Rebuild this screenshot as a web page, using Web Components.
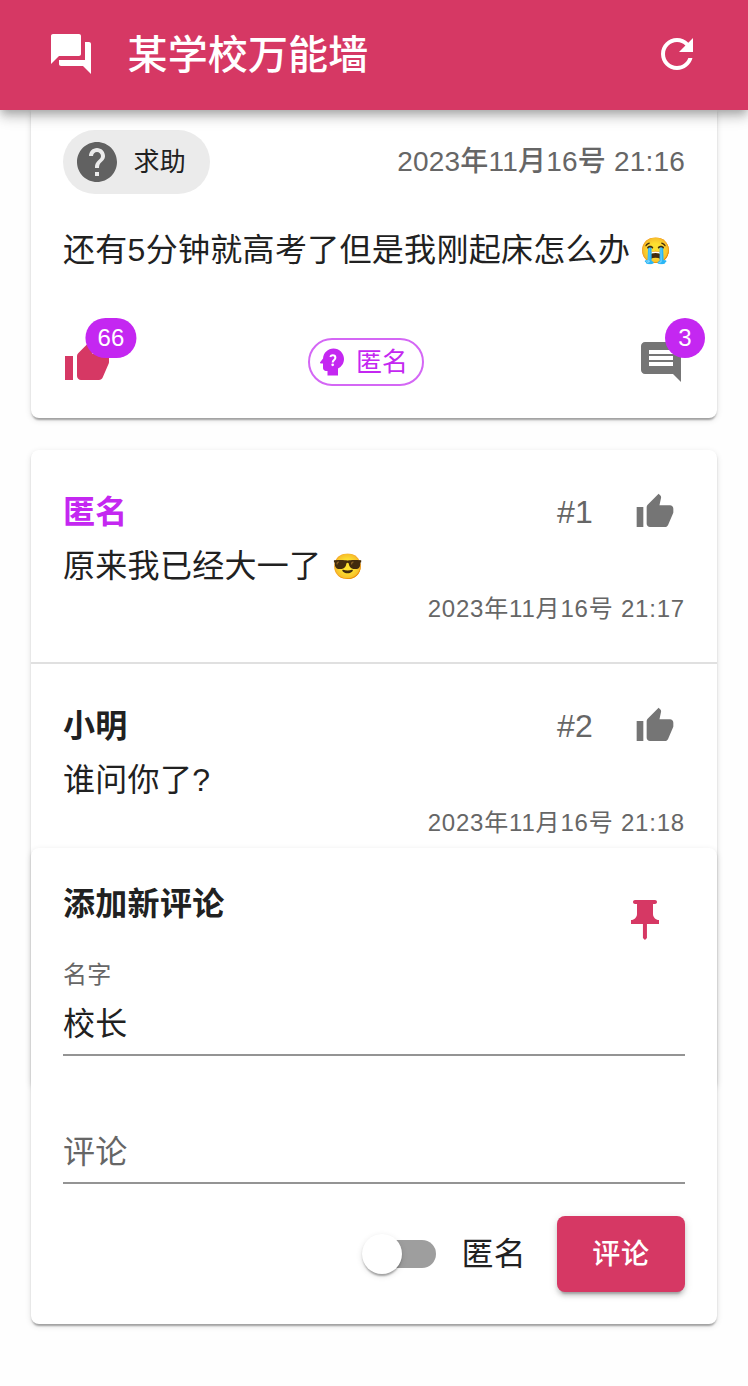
<!DOCTYPE html>
<html lang="zh-CN">
<head>
<meta charset="utf-8">
<title>某学校万能墙</title>
<style>
  html, body { margin: 0; height: 100%; }
  body {
    --primary: #d63864;
    --secondary: #c427f1;
    --muted: #666;
    --icon: #757575;
    --elevation-1: 0 4px 2px -2px rgba(0,0,0,.2), 0 2px 2px rgba(0,0,0,.14), 0 2px 6px rgba(0,0,0,.12);
    background: #fefefe;
    color: #212121;
    overflow: hidden;
    font: 400 32px/48px "Liberation Sans", "Noto Sans CJK SC", sans-serif;
    letter-spacing: .3px;
  }
</style>
</head>
<body>
<wall-page>
  <app-bar slot="bar">某学校万能墙</app-bar>
  <post-card tag="求助" date="2023年11月16号 21:16" likes="66" comments="3" author="匿名">还有5分钟就高考了但是我刚起床怎么办 <wall-emoji>😭</wall-emoji></post-card>
  <comment-list>
    <comment-item author="匿名" anonymous no="#1" date="2023年11月16号 21:17">原来我已经大一了 <wall-emoji>😎</wall-emoji></comment-item>
    <comment-item author="小明" no="#2" date="2023年11月16号 21:18">谁问你了?</comment-item>
  </comment-list>
  <comment-form slot="form"></comment-form>
</wall-page>

<script>
const ICONS = {
  forum: '<path d="M21 6h-2v9H6v2c0 .55.45 1 1 1h11l4 4V7c0-.55-.45-1-1-1zm-4 6V3c0-.55-.45-1-1-1H3c-.55 0-1 .45-1 1v14l4-4h10c.55 0 1-.45 1-1z"/>',
  refresh: '<path d="M17.65 6.35C16.2 4.9 14.21 4 12 4c-4.42 0-7.99 3.58-7.99 8s3.57 8 7.99 8c3.73 0 6.84-2.55 7.73-6h-2.08c-.82 2.33-3.04 4-5.65 4-3.31 0-6-2.69-6-6s2.69-6 6-6c1.66 0 3.14.69 4.22 1.78L13 11h7V4l-2.35 2.35z"/>',
  help: '<path d="M12 2C6.48 2 2 6.48 2 12s4.48 10 10 10 10-4.48 10-10S17.52 2 12 2zm1 17h-2v-2h2v2zm2.07-7.75l-.9.92C13.45 12.9 13 13.5 13 15h-2v-.5c0-1.1.45-2.1 1.17-2.83l1.24-1.26c.37-.36.59-.86.59-1.41 0-1.1-.9-2-2-2s-2 .9-2 2H8c0-2.21 1.79-4 4-4s4 1.79 4 4c0 .88-.36 1.68-.93 2.25z"/>',
  thumb: '<path d="M1 21h4V9H1v12zm22-11c0-1.1-.9-2-2-2h-6.31l.95-4.57.03-.32c0-.41-.17-.79-.44-1.06L14.17 1 7.59 7.59C7.22 7.95 7 8.45 7 9v10c0 1.1.9 2 2 2h9c.83 0 1.54-.5 1.84-1.22l3.02-7.05c.09-.23.14-.47.14-.73v-2z"/>',
  comment: '<path d="M21.99 4c0-1.1-.89-2-1.99-2H4c-1.1 0-2 .9-2 2v12c0 1.1.9 2 2 2h14l4 4-.01-18zM18 14H6v-2h12v2zm0-3H6V9h12v2zm0-3H6V6h12v2z"/>',
  psychology: '<path d="M13 3C9.25 3 6.2 5.94 6.02 9.64L4.1 12.2c-.25.33-.01.8.4.8H6v3c0 1.1.9 2 2 2h1v3h7v-4.68c2.36-1.12 4-3.53 4-6.32 0-3.87-3.13-7-7-7z"/><path d="M10.8 8.6c.35-.75.9-1.1 1.65-1.1 1.05 0 1.8.7 1.8 1.65 0 1.45-1.8 1.5-1.8 3.1" fill="none" stroke="#fff" stroke-width="1.35"/><circle cx="12.45" cy="13.9" r=".9" fill="#fff"/>',
  pin: '<path d="M16 9V4h1c.55 0 1-.45 1-1s-.45-1-1-1H7c-.55 0-1 .45-1 1s.45 1 1 1h1v5c0 1.66-1.34 3-3 3v2h5.97v7l1 1 1-1v-7H19v-2c-1.66 0-3-1.34-3-3z"/>'
};

class WallElement extends HTMLElement {
  connectedCallback() {
    if (this.shadowRoot) return;
    this.attachShadow({ mode: 'open' }).innerHTML = this.render();
  }
  attr(name) { return this.getAttribute(name) || ''; }
}

customElements.define('wall-icon', class extends WallElement {
  render() {
    return `<style>:host{display:block;flex:none;width:48px;height:48px}
      svg{display:block;width:100%;height:100%;fill:currentColor}</style>
      <svg viewBox="0 0 24 24" aria-hidden="true">${ICONS[this.attr('name')]}</svg>`;
  }
});

customElements.define('wall-emoji', class extends WallElement {
  render() {
    return `<style>:host{display:inline-block;font-size:25px;line-height:32px;vertical-align:2px;margin-left:1px}</style><slot></slot>`;
  }
});

customElements.define('wall-page', class extends WallElement {
  render() {
    return `<style>
      :host{display:flex;flex-direction:column;position:relative;height:1386px;overflow:hidden}
      main{display:flex;flex-direction:column;gap:32px;padding:0 31px}
      .dock{position:absolute;left:31px;right:31px;bottom:62px}
      </style>
      <slot name="bar"></slot><main><slot></slot></main><div class="dock"><slot name="form"></slot></div>`;
  }
});

customElements.define('app-bar', class extends WallElement {
  render() {
    return `<style>
      :host{display:flex;align-items:center;box-sizing:border-box;height:110px;padding:0 47px 2px;
        background:var(--primary);color:#fff;position:relative;z-index:1;
        box-shadow:0 4px 8px -2px rgba(0,0,0,.2),0 8px 10px rgba(0,0,0,.14),0 2px 20px rgba(0,0,0,.12)}
      h1{flex:1;margin:2px 0 0 32.5px;font-size:40px;line-height:64px;font-weight:500;letter-spacing:.15px}
      </style>
      <wall-icon name="forum"></wall-icon><h1><slot></slot></h1><wall-icon name="refresh"></wall-icon>`;
  }
});

customElements.define('count-badge', class extends WallElement {
  render() {
    return `<style>
      :host{display:block;position:relative;width:48px;height:48px}
      .n{position:absolute;left:100%;top:0;transform:translate(-50%,-50%);box-sizing:border-box;
        min-width:40px;height:40px;padding:0 12px;border-radius:20px;background:var(--secondary);color:#fff;
        font-size:24px;line-height:40px;text-align:center;letter-spacing:.2px}
      </style><slot></slot><span class="n">${this.attr('count')}</span>`;
  }
});

customElements.define('post-card', class extends WallElement {
  render() {
    return `<style>
      :host{display:flex;flex-direction:column;box-sizing:border-box;height:308px;padding:20px 32px 32px;
        border-radius:0 0 8px 8px;background:#fff;box-shadow:var(--elevation-1)}
      .row{display:flex;align-items:center;justify-content:space-between}
      .tag{display:flex;align-items:center;box-sizing:border-box;height:64px;padding:0 24px 0 10px;border-radius:32px;
        background:#ebebeb;font-size:26px;letter-spacing:.2px}
      .tag wall-icon{color:#616161;margin-right:12.5px}
      time{color:var(--muted);font-size:28px;font-weight:500;letter-spacing:.2px}
      p{margin:32px 0 0;height:48px;white-space:nowrap}
      .foot{margin-top:64px}
      .author{display:flex;align-items:center;box-sizing:border-box;width:116px;height:48px;padding-left:4px;
        border:2px solid #d467f5;border-radius:24px;color:var(--secondary);font-size:26px;letter-spacing:0;margin-right:16px}
      .author wall-icon{width:36px;height:36px;margin-right:6px}
      </style>
      <div class="row"><div class="tag"><wall-icon name="help"></wall-icon><span>${this.attr('tag')}</span></div><time>${this.attr('date')}</time></div>
      <p><slot></slot></p>
      <div class="row foot">
        <count-badge count="${this.attr('likes')}"><wall-icon name="thumb" style="color:var(--primary)"></wall-icon></count-badge>
        <div class="author"><wall-icon name="psychology"></wall-icon><span>${this.attr('author')}</span></div>
        <count-badge count="${this.attr('comments')}"><wall-icon name="comment" style="color:var(--icon)"></wall-icon></count-badge>
      </div>`;
  }
});

customElements.define('comment-list', class extends WallElement {
  render() {
    return `<style>:host{display:block;height:638px;border-radius:8px;background:#fff;box-shadow:var(--elevation-1)}</style><slot></slot>`;
  }
});

customElements.define('comment-item', class extends WallElement {
  render() {
    return `<style>
      :host{display:flex;flex-direction:column;box-sizing:border-box;height:214px;padding:38px 32px 0;border-bottom:2px solid #e0e0e0}
      :host([anonymous]) b{color:var(--secondary)}
      header{display:flex;align-items:center;height:48px}
      b{flex:1;font-weight:700}
      .no{width:78px;color:var(--muted)}
      wall-icon{width:40px;height:40px;margin-right:10px;color:var(--icon)}
      p{margin:6px 0 0;height:48px}
      time{align-self:flex-end;margin-top:-1px;color:var(--muted);font-size:24px;line-height:40px;letter-spacing:.8px}
      </style>
      <header><b>${this.attr('author')}</b><span class="no">${this.attr('no')}</span><wall-icon name="thumb"></wall-icon></header>
      <p><slot></slot></p><time>${this.attr('date')}</time>`;
  }
});

customElements.define('text-field', class extends WallElement {
  render() {
    return `<style>
      :host{display:flex;flex-direction:column;justify-content:flex-end;box-sizing:border-box;height:96px;border-bottom:2px solid #949494}
      .label{color:var(--muted);font-size:24px;line-height:34px;letter-spacing:.2px}
      .value{height:46px;line-height:46px;padding:9px 0 7px}
      .empty{color:var(--muted)}
      </style>
      ${this.attr('value')
        ? `<span class="label">${this.attr('label')}</span><span class="value">${this.attr('value')}</span>`
        : `<span class="value empty">${this.attr('label')}</span>`}`;
  }
});

customElements.define('toggle-switch', class extends WallElement {
  render() {
    return `<style>
      :host{display:flex;align-items:center;gap:25px}
      .track{position:relative;width:68px;height:28px;border-radius:14px;background:#9e9e9e}
      .track::after{content:"";position:absolute;left:-6px;top:-6px;width:40px;height:40px;border-radius:50%;background:#fff;
        box-shadow:0 4px 2px -2px rgba(0,0,0,.2),0 2px 2px rgba(0,0,0,.14),0 2px 6px rgba(0,0,0,.12)}
      </style><span class="track"></span><slot></slot>`;
  }
});

customElements.define('comment-form', class extends WallElement {
  render() {
    return `<style>
      :host{display:flex;flex-direction:column;box-sizing:border-box;height:476px;padding:32px;border-radius:8px;background:#fff;box-shadow:var(--elevation-1)}
      header{display:flex;justify-content:space-between;height:80px}
      h2{margin:0;font-size:32px;line-height:48px;font-weight:700}
      header wall-icon{margin:16px 16px 0 0;color:var(--primary)}
      text-field + text-field{margin-top:32px}
      footer{display:flex;align-items:center;justify-content:flex-end;gap:31px;margin-top:32px}
      button{width:128px;height:76px;padding:0;border:0;border-radius:8px;background:var(--primary);color:#fff;
        font:500 28px/49px "Liberation Sans","Noto Sans CJK SC",sans-serif;letter-spacing:.8px;
        box-shadow:0 6px 2px -4px rgba(0,0,0,.2),0 4px 4px rgba(0,0,0,.14),0 2px 10px rgba(0,0,0,.12)}
      </style>
      <header><h2>添加新评论</h2><wall-icon name="pin"></wall-icon></header>
      <text-field label="名字" value="校长"></text-field>
      <text-field label="评论"></text-field>
      <footer><toggle-switch>匿名</toggle-switch><button>评论</button></footer>`;
  }
});
</script>
</body>
</html>
